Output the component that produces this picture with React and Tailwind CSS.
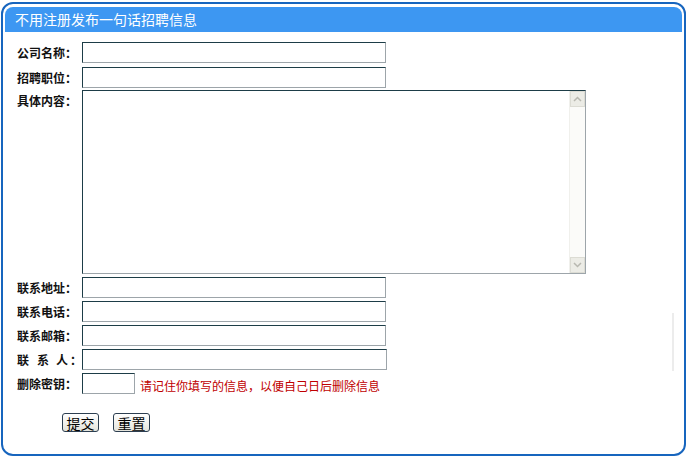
import React from 'react'

const cjk = { fontFamily: '"Noto Sans CJK SC", "Liberation Sans", sans-serif' }

const inputBorder = 'bg-white border border-t-[#1d3d47] border-l-[#1d3d47] border-r-[#9da5aa] border-b-[#9da5aa]'

function Label({ children }) {
  return <div className="w-[65px] h-[21px] flex items-center text-[12px] font-bold text-[#111] leading-none whitespace-pre">{children}</div>
}

function Field({ label, w = 'w-[304px]' }) {
  return (
    <div className="flex items-start">
      <Label>{label}</Label>
      <div className={`${w} h-[21px] ${inputBorder}`} />
    </div>
  )
}

function Btn({ children }) {
  return (
    <div className="w-[37px] h-[19px] flex items-center justify-center rounded-[3px] border border-[#2c3e50] bg-gradient-to-b from-white to-[#e4e4dc] text-[14px] leading-none text-black">
      {children}
    </div>
  )
}

export default function App() {
  return (
    <div className="w-[688px] h-[457px] bg-white overflow-hidden" style={cjk}>
      <div className="relative ml-[1px] mt-[2px] w-[685px] h-[454px] border-2 border-[#1765be] rounded-[12px] px-[2px] pt-[3px]">
        <div className="h-[25px] bg-[#3d97f2] rounded-t-[8px] flex items-center pl-[10px] text-white text-[14px]">
          不用注册发布一句话招聘信息
        </div>
        <div className="pl-[12px] pt-[10px] flex flex-col">
          <div className="flex flex-col gap-[4px]">
            <Field label="公司名称：" />
            <Field label="招聘职位：" />
          </div>
          <div className="flex items-start mt-[2px]">
            <Label>具体内容：</Label>
            <div className={`w-[504px] h-[184px] ${inputBorder} flex justify-end`}>
              <div className="w-[16px] h-full flex flex-col justify-between border-l border-[#f0f0ec] bg-[#fbfbf9]">
                <div className="h-[16px] bg-[#ecece6] border border-[#dcdcd4] flex items-center justify-center">
                  <svg width="9" height="6" viewBox="0 0 9 6"><path d="M1 5 L4.5 1.5 L8 5" fill="none" stroke="#b8b8b0" strokeWidth="1.5" /></svg>
                </div>
                <div className="h-[16px] bg-[#ecece6] border border-[#dcdcd4] flex items-center justify-center">
                  <svg width="9" height="6" viewBox="0 0 9 6"><path d="M1 1 L4.5 4.5 L8 1" fill="none" stroke="#b8b8b0" strokeWidth="1.5" /></svg>
                </div>
              </div>
            </div>
          </div>
          <div className="flex flex-col gap-[3px] mt-[3px]">
            <Field label="联系地址：" />
            <Field label="联系电话：" />
            <Field label="联系邮箱：" />
            <div className="flex items-start">
              <div className="w-[65px] h-[21px] flex items-center text-[12px] font-bold text-[#111] leading-none">
                <span className="w-[20px]">联</span>
                <span className="w-[19px]">系</span>
                <span className="w-[14px]">人</span>
                <span>：</span>
              </div>
              <div className={`w-[305px] h-[21px] ${inputBorder}`} />
            </div>
            <div className="flex items-start">
              <Label>删除密钥：</Label>
              <div className={`w-[53px] h-[21px] ${inputBorder}`} />
              <div className="ml-[5px] mt-[4px] h-[17px] flex items-center text-[12px] text-[#c00000] leading-none">请记住你填写的信息，以便自己日后删除信息</div>
            </div>
          </div>
          <div className="flex gap-[14px] pl-[45px] mt-[19px]">
            <Btn>提交</Btn>
            <Btn>重置</Btn>
          </div>
        </div>
        <div className="absolute left-[669px] top-[309px] w-[2px] h-[58px] bg-[#ececec]" />
      </div>
    </div>
  )
}
